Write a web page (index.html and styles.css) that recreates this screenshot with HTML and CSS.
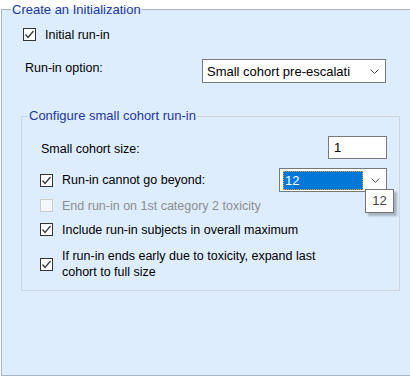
FILE: index.html
```html
<!DOCTYPE html>
<html lang="en">
<head>
    <meta charset="UTF-8">
    <title>Create an Initialization</title>
    <link rel="stylesheet" href="styles.css">
</head>
<body>
    <fieldset class="group outer">
        <legend>Create an Initialization</legend>

        <div class="check-row initial">
            <span class="box checked">
                <svg width="11" height="11" viewBox="0 0 11 11"><polyline points="1.5,5.5 4,8.5 9.5,2" /></svg>
            </span>
            <span>Initial run-in</span>
        </div>

        <div class="option-row">
            <span class="option-label">Run-in option:</span>
            <div class="combo wide">
                <span class="combo-text">Small cohort pre-escalati</span>
                <svg class="chevron" width="9" height="5" viewBox="0 0 9 5"><polyline points="0.5,0.5 4.5,4.5 8.5,0.5" /></svg>
            </div>
        </div>

        <fieldset class="group inner">
            <legend>Configure small cohort run-in</legend>

            <div class="field-row size-row">
                <span class="size-label">Small cohort size:</span>
                <div class="textbox">1</div>
            </div>

            <div class="field-row beyond-row">
                <div class="check-row">
                    <span class="box checked">
                        <svg width="11" height="11" viewBox="0 0 11 11"><polyline points="1.5,5.5 4,8.5 9.5,2" /></svg>
                    </span>
                    <span>Run-in cannot go beyond:</span>
                </div>
                <div class="combo small">
                    <span class="selection">12</span>
                    <svg class="chevron" width="9" height="5" viewBox="0 0 9 5"><polyline points="0.5,0.5 4.5,4.5 8.5,0.5" /></svg>
                    <div class="tooltip">12</div>
                </div>
            </div>

            <div class="check-row disabled">
                <span class="box"></span>
                <span>End run-in on 1st category 2 toxicity</span>
            </div>

            <div class="check-row include">
                <span class="box checked">
                    <svg width="11" height="11" viewBox="0 0 11 11"><polyline points="1.5,5.5 4,8.5 9.5,2" /></svg>
                </span>
                <span>Include run-in subjects in overall maximum</span>
            </div>

            <div class="check-row expand">
                <span class="box checked">
                    <svg width="11" height="11" viewBox="0 0 11 11"><polyline points="1.5,5.5 4,8.5 9.5,2" /></svg>
                </span>
                <span>If run-in ends early due to toxicity, expand last<br>cohort to full size</span>
            </div>
        </fieldset>
    </fieldset>
</body>
</html>
```

FILE: styles.css
```css
html, body {
    margin: 0;
    padding: 0;
    background-color: white;
    overflow: hidden;
}
body {
    font-family: "Liberation Sans", Arial, sans-serif;
    font-size: 12.5px;
    color: #000;
    width: 410px;
    height: 380px;
}
.group {
    margin: 0;
    padding: 0;
    min-width: 0;
    box-sizing: border-box;
}
.group legend {
    color: #22379c;
    padding: 0 1px;
    font-size: 13px;
}
.outer {
    margin-left: 1px;
    width: 409px;
    height: 376px;
    border: 1px solid #a9b3c2;
    border-right: none;
    background-color: #deedfe;
}
.outer > legend {
    margin-left: 9px;
    line-height: 19px;
}
.inner {
    margin: 25px 0 0 19px;
    width: 379px;
    border: 1px solid #cfd5dc;
    padding-bottom: 10px;
}
.inner > legend {
    margin-left: 6px;
    line-height: 16px;
}

/* checkboxes */
.check-row {
    display: flex;
    align-items: center;
    gap: 9px;
    line-height: 16px;
}
.box {
    width: 13px;
    height: 13px;
    box-sizing: border-box;
    border: 1px solid #333;
    background-color: #fff;
    display: flex;
    align-items: center;
    justify-content: center;
    flex: none;
}
.box svg polyline {
    fill: none;
    stroke: #333;
    stroke-width: 1.2;
}
.initial {
    margin: 8px 0 0 21px;
    height: 15px;
}
.disabled {
    color: #8d8d8d;
    margin: 6px 0 0 18px;
    height: 15px;
}
.disabled .box {
    border-color: #cccccc;
    background-color: #f4f8fd;
}
.include {
    margin: 9px 0 0 18px;
    height: 15px;
}
.expand {
    margin: 11px 0 0 18px;
}

/* run-in option row */
.option-row {
    display: flex;
    align-items: flex-start;
    margin: 17px 0 0 23px;
}
.option-label {
    width: 177px;
    padding-top: 1px;
    line-height: 16px;
}
.combo {
    position: relative;
    box-sizing: border-box;
    border: 1px solid #7a7a7a;
    background-color: #fff;
    height: 24px;
    display: flex;
    align-items: center;
}
.combo.wide {
    width: 184px;
    padding-left: 4px;
    font-size: 13px;
}
.combo-text {
    flex: 1;
}
.chevron {
    margin-right: 6px;
}
.chevron polyline {
    fill: none;
    stroke: #444;
    stroke-width: 1;
}

/* inner rows */
.field-row {
    display: flex;
    align-items: center;
    justify-content: space-between;
    padding-right: 12px;
}
.size-row {
    margin-top: 12px;
}
.size-label {
    margin-left: 19px;
    padding-top: 2px;
}
.textbox {
    width: 59px;
    height: 23px;
    box-sizing: border-box;
    border: 1px solid #7a7a7a;
    background-color: #fff;
    padding-left: 5px;
    font-size: 13px;
    line-height: 21px;
}
.beyond-row {
    margin-top: 9px;
    padding-left: 18px;
}
.combo.small {
    width: 108px;
    padding: 0 0 0 3px;
}
.selection {
    width: 82px;
    height: 19px;
    box-sizing: border-box;
    background-color: #0078d7;
    border: 1px dotted #e0a040;
    color: #fff;
    font-size: 13px;
    line-height: 17px;
    padding-left: 1px;
    margin-right: 8px;
}
.tooltip {
    position: absolute;
    left: 85px;
    top: 20px;
    width: 29px;
    height: 24px;
    box-sizing: border-box;
    border: 1px solid #767676;
    background-color: #fff;
    font-size: 13px;
    line-height: 22px;
    text-align: center;
    color: #444;
    box-shadow: 3px 3px 2px rgba(0,0,0,0.25);
}
```
